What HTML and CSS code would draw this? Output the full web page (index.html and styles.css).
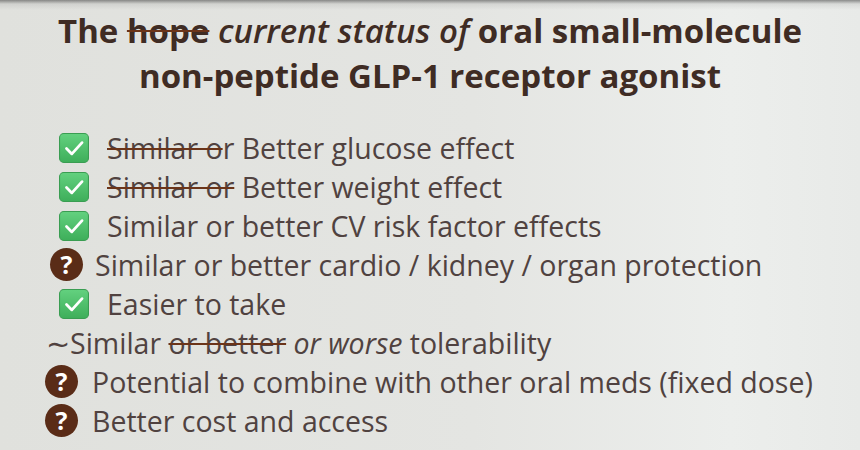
FILE: index.html
```html
<!DOCTYPE html>
<html lang="en">
<head>
<meta charset="utf-8">
<title>GLP-1 status</title>
<link rel="stylesheet" href="styles.css">
</head>
<body>
<div class="slide">
  <h1 class="title">
    <span class="line">The <s class="strike">hope</s> <i>current status of</i> oral small-molecule</span>
    <span class="line">non-peptide GLP-1 receptor agonist</span>
  </h1>
  <ul class="list">
    <li class="row row-check">
      <span class="check"><svg viewBox="0 0 28 28" width="30" height="30"><defs><linearGradient id="g1" x1="0" y1="0" x2="0" y2="1"><stop offset="0" stop-color="#63d17f"/><stop offset="1" stop-color="#3eae5a"/></linearGradient></defs><rect x="0.5" y="0.5" width="27" height="27" rx="4" fill="url(#g1)" stroke="#3a9d52" stroke-width="1"/><path d="M7 14.5 L12 19.5 L21.5 9" fill="none" stroke="#fff" stroke-width="2.6" stroke-linecap="round" stroke-linejoin="round"/></svg></span>
      <span class="text"><s class="strike">Similar o</s>r Better glucose effect</span>
    </li>
    <li class="row row-check">
      <span class="check"><svg viewBox="0 0 28 28" width="30" height="30"><rect x="0.5" y="0.5" width="27" height="27" rx="4" fill="url(#g1)" stroke="#3a9d52" stroke-width="1"/><path d="M7 14.5 L12 19.5 L21.5 9" fill="none" stroke="#fff" stroke-width="2.6" stroke-linecap="round" stroke-linejoin="round"/></svg></span>
      <span class="text"><s class="strike">Similar or</s> Better weight effect</span>
    </li>
    <li class="row row-check">
      <span class="check"><svg viewBox="0 0 28 28" width="30" height="30"><rect x="0.5" y="0.5" width="27" height="27" rx="4" fill="url(#g1)" stroke="#3a9d52" stroke-width="1"/><path d="M7 14.5 L12 19.5 L21.5 9" fill="none" stroke="#fff" stroke-width="2.6" stroke-linecap="round" stroke-linejoin="round"/></svg></span>
      <span class="text">Similar or better CV risk factor effects</span>
    </li>
    <li class="row row-q">
      <span class="q">?</span>
      <span class="text">Similar or better cardio / kidney / organ protection</span>
    </li>
    <li class="row row-check">
      <span class="check"><svg viewBox="0 0 28 28" width="30" height="30"><rect x="0.5" y="0.5" width="27" height="27" rx="4" fill="url(#g1)" stroke="#3a9d52" stroke-width="1"/><path d="M7 14.5 L12 19.5 L21.5 9" fill="none" stroke="#fff" stroke-width="2.6" stroke-linecap="round" stroke-linejoin="round"/></svg></span>
      <span class="text">Easier to take</span>
    </li>
    <li class="row row-tilde">
      <span class="text"><span class="tilde">∼</span>Similar <s class="strike">or better</s> <i>or worse</i> tolerability</span>
    </li>
    <li class="row row-q row-q2">
      <span class="q">?</span>
      <span class="text">Potential to combine with other oral meds (fixed dose)</span>
    </li>
    <li class="row row-q row-q2">
      <span class="q">?</span>
      <span class="text">Better cost and access</span>
    </li>
  </ul>
</div>
</body>
</html>
```

FILE: styles.css
```css
html, body {
  margin: 0;
  padding: 0;
}
body {
  width: 860px;
  height: 450px;
  overflow: hidden;
}
.slide {
  width: 860px;
  height: 450px;
  box-sizing: border-box;
  font-family: "Open Sans", "Noto Sans", sans-serif;
  color: #504240;
  background:
    linear-gradient(to bottom, rgba(60,60,60,0.55) 0px, rgba(120,120,120,0.15) 4px, rgba(0,0,0,0) 10px),
    linear-gradient(to right, #e0e1dd 0%, #e4e5e2 55%, #eceeec 85%, #e8eae8 100%);
  padding-top: 8px;
}
.title {
  margin: 0;
  font-size: 33px;
  font-weight: 700;
  line-height: 45px;
  text-align: center;
  color: #3f2c24;
}
.title .line {
  display: block;
}
.title i {
  font-weight: 600;
}
.strike {
  text-decoration: line-through;
  text-decoration-color: #6b3419;
  text-decoration-thickness: 2px;
}
.list {
  list-style: none;
  margin: 30px 0 0 0;
  padding: 0 0 0 48px;
  font-size: 28.5px;
}
.row {
  display: flex;
  align-items: center;
  height: 39px;
}
.check {
  display: flex;
  width: 30px;
  height: 30px;
  margin-left: 11px;
  margin-right: 18px;
}
.q {
  display: flex;
  align-items: center;
  justify-content: center;
  width: 33px;
  height: 33px;
  border-radius: 50%;
  background: #5a2c17;
  color: #fff;
  font-weight: 700;
  font-size: 25px;
  line-height: 1;
  margin-left: 2px;
  margin-right: 12px;
}
.row-q2 .q {
  margin-left: -3px;
  margin-right: 14px;
}
.tilde {
  display: inline-block;
  margin-left: -2px;
}
.text {
  white-space: nowrap;
}
```
